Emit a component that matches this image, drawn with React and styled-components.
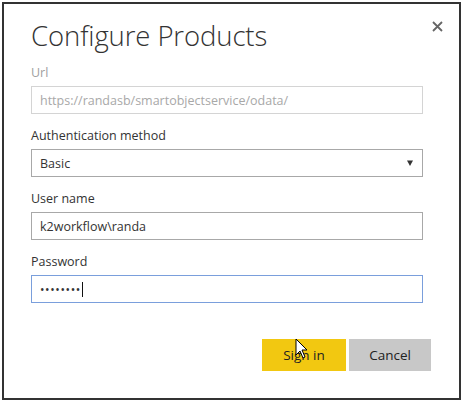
import React from "react";
import styled, { createGlobalStyle } from "styled-components";

const Global = createGlobalStyle`
  html, body { margin: 0; padding: 0; background: #fff; }
  body { font-family: "Open Sans", "Noto Sans", sans-serif; }
`;

const Frame = styled.div`
  position: relative;
  box-sizing: border-box;
  margin: 2px 0 0 2px;
  width: 459px;
  height: 398px;
  border: 2px solid #333;
  background: #fff;
  padding: 14px 0 0 27px;
`;

const Title = styled.h1`
  margin: 0 0 10px 0;
  font-family: "Open Sans", sans-serif;
  font-weight: 300;
  font-size: 27.5px;
  line-height: 36px;
  color: #333;
  letter-spacing: -0.1px;
`;

const Close = styled.button`
  position: absolute;
  top: 14px;
  right: 14px;
  width: 16px;
  height: 16px;
  padding: 0;
  border: none;
  background: none;
  display: flex;
  align-items: center;
  justify-content: center;
`;

const Field = styled.div`
  display: flex;
  flex-direction: column;
  gap: 4px;
  margin-bottom: 13px;
`;

const Label = styled.label`
  font-size: 12.5px;
  line-height: 18px;
  color: ${(p) => (p.$disabled ? "#a0a0a0" : "#333")};
`;

const Box = styled.div`
  box-sizing: border-box;
  width: 392px;
  height: 28px;
  border: 1px solid ${(p) => p.$border};
  display: flex;
  align-items: center;
  padding: 0 8px 0 8px;
  font-size: 12.5px;
  color: ${(p) => p.$color || "#333"};
  background: #fff;
`;

const Value = styled.span`
  flex: 1;
  white-space: nowrap;
  display: flex;
  align-items: center;
`;

const Caret = styled.span`
  display: inline-block;
  width: 1px;
  height: 15px;
  background: #111;
  margin-left: 1px;
`;

const Dots = styled.span`
  letter-spacing: 0.6px;
  font-size: 12px;
  color: #333;
`;

const Arrow = styled.svg`
  margin-right: 1px;
`;

const Actions = styled.div`
  display: flex;
  justify-content: flex-end;
  gap: 3px;
  width: 400px;
  margin-top: 36px;
`;

const Button = styled.button`
  box-sizing: border-box;
  height: 32px;
  width: ${(p) => p.$w}px;
  border: none;
  background: ${(p) => p.$bg};
  font-family: "Open Sans", sans-serif;
  font-size: 13.5px;
  color: #222;
  padding: 0;
`;

const Cursor = styled.svg`
  position: absolute;
  left: 291px;
  top: 334px;
`;

export default function App() {
  return (
    <>
      <Global />
      <Frame>
        <Close aria-label="Close">
          <svg width="11" height="11" viewBox="0 0 11 11">
            <path d="M1 1 L10 10 M10 1 L1 10" stroke="#666" strokeWidth="1.8" />
          </svg>
        </Close>
        <Title>Configure Products</Title>
        <Field>
          <Label $disabled>Url</Label>
          <Box $border="#d4d4d4" $color="#a8a8a8">
            <Value>https://randasb/smartobjectservice/odata/</Value>
          </Box>
        </Field>
        <Field>
          <Label>Authentication method</Label>
          <Box $border="#a8a8a8">
            <Value>Basic</Value>
            <Arrow width="6" height="6" viewBox="0 0 6 6">
              <path d="M0 0.5 H6 L3 6 Z" fill="#333" />
            </Arrow>
          </Box>
        </Field>
        <Field>
          <Label>User name</Label>
          <Box $border="#a8a8a8">
            <Value>k2workflow\randa</Value>
          </Box>
        </Field>
        <Field>
          <Label>Password</Label>
          <Box $border="#7a9fdc">
            <Value>
              <Dots>••••••••</Dots>
              <Caret />
            </Value>
          </Box>
        </Field>
        <Actions>
          <Button $w={84} $bg="#f2c811">Sign in</Button>
          <Button $w={82} $bg="#c8c8c8">Cancel</Button>
        </Actions>
        <Cursor width="14" height="22" viewBox="0 0 14 22">
          <path
            d="M1 1 L1 17 L5 13 L8 20 L10 19 L7 12 L12 12 Z"
            fill="#fff"
            stroke="#000"
            strokeWidth="1"
            strokeLinejoin="round"
          />
        </Cursor>
      </Frame>
    </>
  );
}
